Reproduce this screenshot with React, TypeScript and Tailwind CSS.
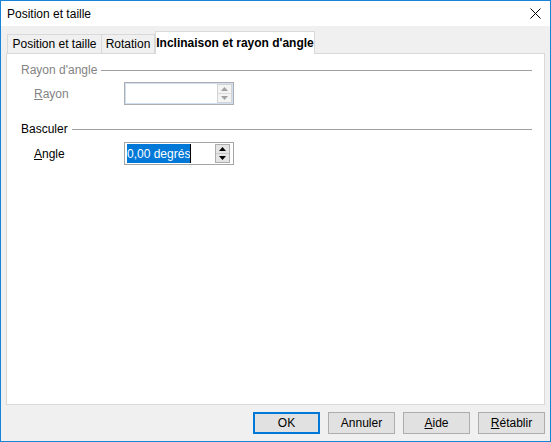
import React from "react";

function SpinBox({ disabled }: { disabled?: boolean }) {
  const arrow = disabled ? "#a0a0a0" : "#000000";
  return (
    <div className={`flex flex-col w-[15px] h-[19px] border ${disabled ? "border-[#d4d4d4] bg-[#f4f4f4]" : "border-[#adadad] bg-[#e5e5e5]"}`}>
      <div className="flex-1 flex items-center justify-center">
        <svg width="7" height="4" viewBox="0 0 7 4">
          <path d="M0 4 L3.5 0 L7 4 Z" fill={arrow} />
        </svg>
      </div>
      <div className={`h-px ${disabled ? "bg-[#dcdcdc]" : "bg-[#c8c8c8]"}`}></div>
      <div className="flex-1 flex items-center justify-center">
        <svg width="7" height="4" viewBox="0 0 7 4">
          <path d="M0 0 L7 0 L3.5 4 Z" fill={arrow} />
        </svg>
      </div>
    </div>
  );
}

function GroupHeading({ label, disabled }: { label: string; disabled?: boolean }) {
  return (
    <div className="flex items-center h-4">
      <span className={disabled ? "text-[#838383]" : "text-black"}>{label}</span>
      <div className="flex-1 h-px bg-[#a0a0a0] ml-[4px] mr-[12px]"></div>
    </div>
  );
}

export default function App() {
  const buttons = [
    { label: <>OK</>, primary: true },
    { label: <>Annuler</> },
    { label: <><span className="underline">A</span>ide</> },
    { label: <><span className="underline">R</span>établir</> },
  ];

  return (
    <div className="w-[551px] h-[442px] border border-[#1883d7] bg-[#f0f0f0] flex flex-col text-[12px] text-black font-['Liberation_Sans',Arial,sans-serif] select-none">
      {/* Title bar */}
      <div className="h-[25px] bg-white flex items-center justify-between pl-[6px] pr-[9px] shrink-0">
        <span>Position et taille</span>
        <svg width="11" height="11" viewBox="0 0 11 11">
          <path d="M0.5 0.5 L10.5 10.5 M10.5 0.5 L0.5 10.5" stroke="#000" strokeWidth="1" />
        </svg>
      </div>

      {/* Body */}
      <div className="flex-1 flex flex-col px-[5px] pt-[5px]">
        {/* Tabs */}
        <div className="flex items-end h-[22px] pl-px relative z-10">
          <div className="w-[95px] h-[19px] border border-b-0 border-[#d9d9d9] flex items-center justify-center">Position et taille</div>
          <div className="w-[53px] h-[19px] border border-l-0 border-b-0 border-[#d9d9d9] flex items-center justify-center">Rotation</div>
          <div className="w-[160px] h-[23px] -mb-px bg-white border border-b-0 border-[#d9d9d9] flex items-center justify-center font-bold">Inclinaison et rayon d'angle</div>
        </div>

        {/* Panel */}
        <div className="flex-1 bg-white border border-[#d9d9d9] flex flex-col pt-[8px] pl-[14px]">
          <GroupHeading label="Rayon d'angle" disabled />
          <div className="flex items-center mt-[4px]">
            <span className="w-[90px] ml-[13px] text-[#838383]"><span className="underline">R</span>ayon</span>
            <div className="w-[110px] h-[23px] border border-[#adadad] shadow-[inset_0_0_0_1px_#cfe0f3] flex items-center justify-end pr-[1px]">
              <SpinBox disabled />
            </div>
          </div>

          <div className="mt-[16px]">
            <GroupHeading label="Basculer" />
          </div>
          <div className="flex items-center mt-[5px]">
            <span className="w-[90px] ml-[13px]"><span className="underline">A</span>ngle</span>
            <div className="w-[110px] h-[23px] border border-[#a5a5a5] flex items-center justify-between pl-[2px] pr-[3px]">
              <div className="flex items-center h-[19px]">
                <span className="bg-[#0078d7] text-white h-[19px] flex items-center leading-none">0,00 degrés</span>
                <span className="w-px h-[19px] bg-black"></span>
              </div>
              <SpinBox />
            </div>
          </div>
        </div>

        {/* Buttons */}
        <div className="flex justify-end gap-[8px] mt-[7px] mb-[7px] h-[22px]">
          {buttons.map((b, i) => (
            <div
              key={i}
              className={`w-[67px] h-[22px] bg-[#e1e1e1] flex items-center justify-center ${b.primary ? "border-2 border-[#0078d7]" : "border border-[#adadad]"}`}
            >
              {b.label}
            </div>
          ))}
        </div>
      </div>
    </div>
  );
}
